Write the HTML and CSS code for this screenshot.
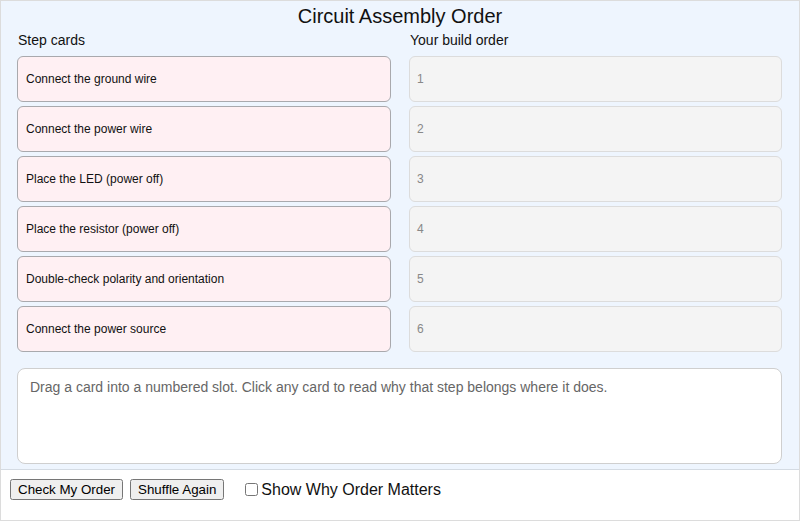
FILE: index.html
```html
<!DOCTYPE html>
<html lang="en">
<head>
  <meta charset="UTF-8">
  <meta name="viewport" content="width=device-width, initial-scale=1.0">
  <title>Circuit Assembly Order</title>
  <link rel="stylesheet" href="styles.css">
</head>
<body>
  <div class="app">
    <div class="board">
      <h1 class="title">Circuit Assembly Order</h1>
      <div class="columns">
        <div class="col-head">Step cards</div>
        <div class="col-head">Your build order</div>

        <div class="card">Connect the ground wire</div>
        <div class="slot">1</div>
        <div class="card">Connect the power wire</div>
        <div class="slot">2</div>
        <div class="card">Place the LED (power off)</div>
        <div class="slot">3</div>
        <div class="card">Place the resistor (power off)</div>
        <div class="slot">4</div>
        <div class="card">Double-check polarity and orientation</div>
        <div class="slot">5</div>
        <div class="card">Connect the power source</div>
        <div class="slot">6</div>
      </div>
      <div class="feedback" id="feedback">Drag a card into a numbered slot. Click any card to read why that step belongs where it does.</div>
    </div>

    <div class="controls">
      <button type="button" id="checkBtn">Check My Order</button>
      <button type="button" id="shuffleBtn">Shuffle Again</button>
      <label class="toggle">
        <input type="checkbox" id="showWhy">
        Show Why Order Matters
      </label>
    </div>
  </div>
</body>
</html>
```

FILE: styles.css
```css
/* Layout for the assembly-order activity */
body {
  margin: 0;
  font-family: "Liberation Sans", Arial, sans-serif;
}

.app {
  width: 800px;
  height: 521px;
  box-sizing: border-box;
  border: 1px solid #dcdcdc;
}

.board {
  background-color: #eef5fe;
  height: 469px;
  box-sizing: border-box;
  padding: 3px 16px 0 16px;
  border-bottom: 1px solid #d4dbe3;
}

.title {
  margin: 0;
  font-size: 20px;
  font-weight: normal;
  line-height: 24px;
  text-align: center;
  color: #111;
}

.columns {
  display: grid;
  grid-template-columns: 374px 373px;
  column-gap: 18px;
  row-gap: 4px;
  margin-top: 4px;
}

.col-head {
  font-size: 14px;
  line-height: 16px;
  color: #111;
  margin-left: 1px;
  margin-bottom: 4px;
}

.card, .slot {
  height: 46px;
  box-sizing: border-box;
  display: flex;
  align-items: center;
  padding-left: 8px;
  font-size: 12px;
  border-radius: 6px;
}

.card {
  background-color: #fff0f3;
  border: 1.5px solid #a9a9ad;
  color: #111;
}

.slot {
  background-color: #f4f4f4;
  border: 1.5px solid #dcdcdc;
  color: #888;
  padding-left: 7px;
}

.feedback {
  margin-top: 16px;
  height: 96px;
  box-sizing: border-box;
  width: 765px;
  padding: 9px 12px;
  background-color: #fff;
  border: 1px solid #cfcfcf;
  border-radius: 8px;
  font-size: 14px;
  line-height: 18px;
  color: #666;
}

.controls {
  display: flex;
  align-items: center;
  padding: 9px 9px 0 9px;
}

.controls button {
  font-family: "Liberation Sans", Arial, sans-serif;
  font-size: 13.333px;
  margin-right: 7px;
}

.toggle {
  display: flex;
  align-items: center;
  font-size: 16px;
  color: #111;
  margin-left: 10px;
}

.toggle input {
  margin: 0 3px 0 4px;
  width: 13px;
  height: 13px;
}
```
